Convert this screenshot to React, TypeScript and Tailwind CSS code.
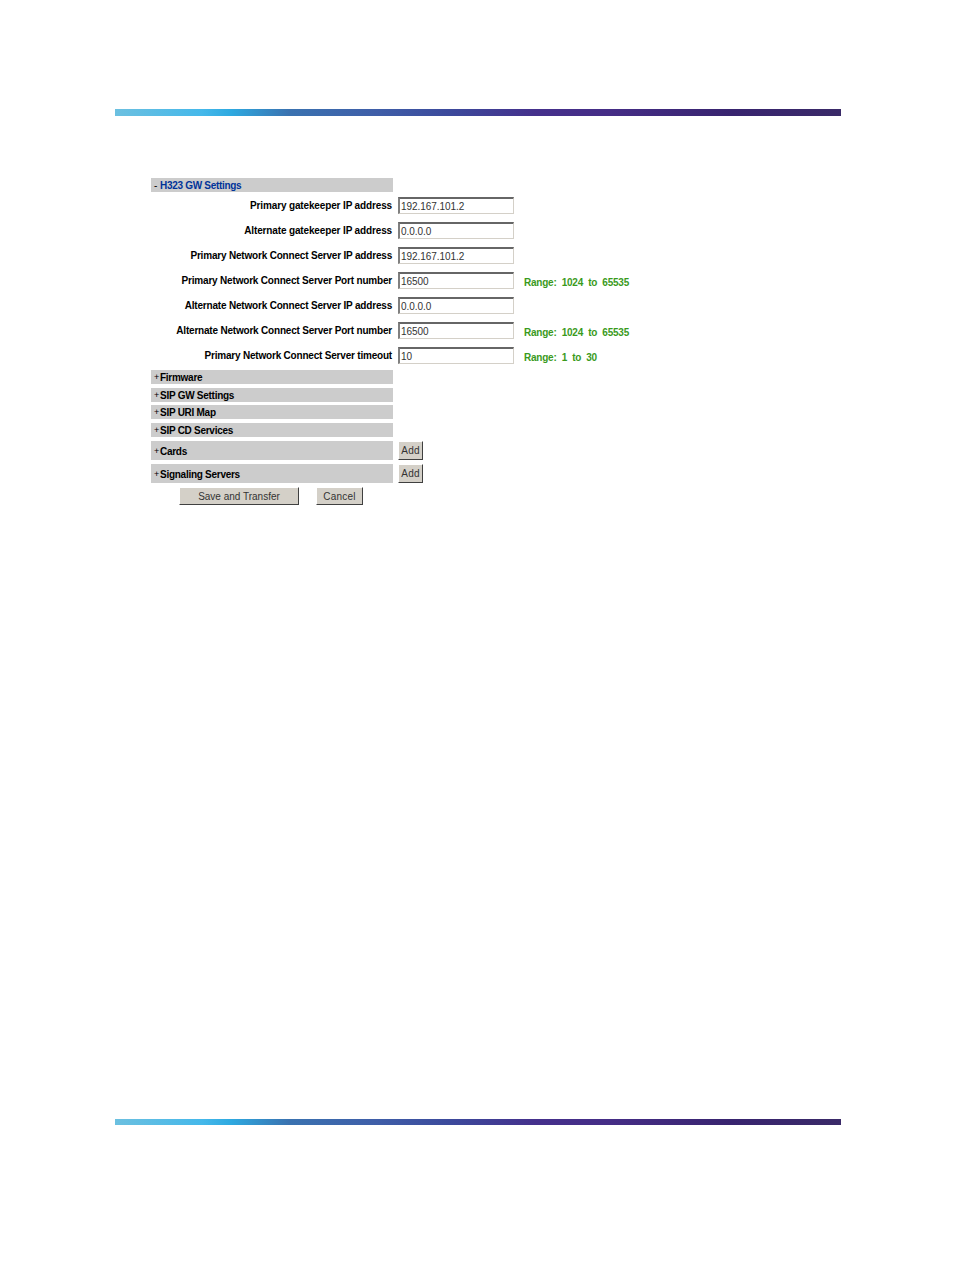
const fields = [
  { label: "Primary gatekeeper IP address", value: "192.167.101.2", track: "tracking-[-0.14px]" },
  { label: "Alternate gatekeeper IP address", value: "0.0.0.0", track: "tracking-[-0.14px]" },
  { label: "Primary Network Connect Server IP address", value: "192.167.101.2", track: "tracking-[-0.19px]" },
  { label: "Primary Network Connect Server Port number", value: "16500", range: "Range:  1024  to  65535", track: "tracking-[-0.19px]" },
  { label: "Alternate Network Connect Server IP address", value: "0.0.0.0", track: "tracking-[-0.19px]" },
  { label: "Alternate Network Connect Server Port number", value: "16500", range: "Range:  1024  to  65535", track: "tracking-[-0.2px]" },
  { label: "Primary Network Connect Server timeout", value: "10", range: "Range:  1  to  30", track: "tracking-[-0.2px]" },
];

function Bar({ bottom }: { bottom?: boolean }) {
  return (
    <div className={`w-[726px] bg-[linear-gradient(90deg,#6cc0e0_0%,#45b8ea_12%,#2ea9e0_16%,#3a72b0_24%,#3f5ea8_36%,#3c4a9c_46%,#45308c_58%,#452d86_68%,#38246f_85%,#3a2a68_100%)] ${bottom ? "h-[6px]" : "h-[7px]"}`} />
  );
}

function Section({ title, tall, add, mb }: { title: string; tall?: boolean; add?: boolean; mb: string }) {
  return (
    <div className={`flex items-center ${mb}`}>
      <div className={`w-[242px] bg-[#cccccc] flex items-center pl-[3px] font-bold text-[10px] tracking-[-0.27px] text-black ${tall ? "h-[19px] pt-[1px]" : "h-[14px]"}`}>
        <span className="font-normal text-[9px] leading-none pt-[1px] w-[6px]">+</span>
        {title}
      </div>
      {add && (
        <button className="ml-[5px] w-[25px] h-[19px] bg-[#d4d0c8] text-[10px] tracking-[0.2px] text-[#333333] border border-t-white border-l-white border-r-[#404040] border-b-[#404040]">
          Add
        </button>
      )}
    </div>
  );
}

export default function App() {
  return (
    <div className="w-[954px] h-[1272px] bg-white pt-[109px] pl-[115px] font-['Liberation_Sans',Arial,sans-serif] overflow-hidden">
      <Bar />
      <div className="ml-[36px] mt-[62px]">
        <div className="w-[242px] h-[14px] bg-[#cccccc] flex items-center pl-[3px] font-bold text-[10px] tracking-[-0.3px] text-[#003399] mb-[5px]">
          <span className="font-normal w-[6px] text-black">-</span>
          H323 GW Settings
        </div>
        {fields.map((f) => (
          <div key={f.label} className="flex items-center h-[17px] mb-[8px]">
            <div className={`w-[241px] text-right text-[10px] font-bold text-black whitespace-nowrap ${f.track}`}>{f.label}</div>
            <div className="ml-[6px] w-[116px] h-[17px] bg-white border border-t-[2px] border-l-[2px] border-t-[#666666] border-l-[#808080] border-r-[#d4d0c8] border-b-[#d4d0c8] text-[10px] leading-[16px] pl-[1px] tracking-[-0.05px] text-[#333333]">
              {f.value}
            </div>
            {f.range && (
              <div className="ml-[10px] mt-[4px] text-[10px] font-bold tracking-[-0.22px] text-[#3a9a1c] whitespace-pre">{f.range}</div>
            )}
          </div>
        ))}
        <div className="-mt-[2px]">
          <Section title="Firmware" mb="mb-[4px]" />
          <Section title="SIP GW Settings" mb="mb-[3px]" />
          <Section title="SIP URI Map" mb="mb-[4px]" />
          <Section title="SIP CD Services" mb="mb-[4px]" />
          <Section title="Cards" tall add mb="mb-[4px]" />
          <Section title="Signaling Servers" tall add mb="mb-[4px]" />
        </div>
        <div className="flex ml-[28px]">
          <button className="w-[120px] h-[18px] bg-[#d4d0c8] text-[10px] text-[#333333] border border-t-white border-l-white border-r-[#404040] border-b-[#404040]">
            Save and Transfer
          </button>
          <button className="ml-[17px] w-[47px] h-[18px] bg-[#d4d0c8] text-[10px] tracking-[0.2px] text-[#333333] border border-t-white border-l-white border-r-[#404040] border-b-[#404040]">
            Cancel
          </button>
        </div>
      </div>
      <div className="mt-[614px]">
        <Bar bottom />
      </div>
    </div>
  );
}
